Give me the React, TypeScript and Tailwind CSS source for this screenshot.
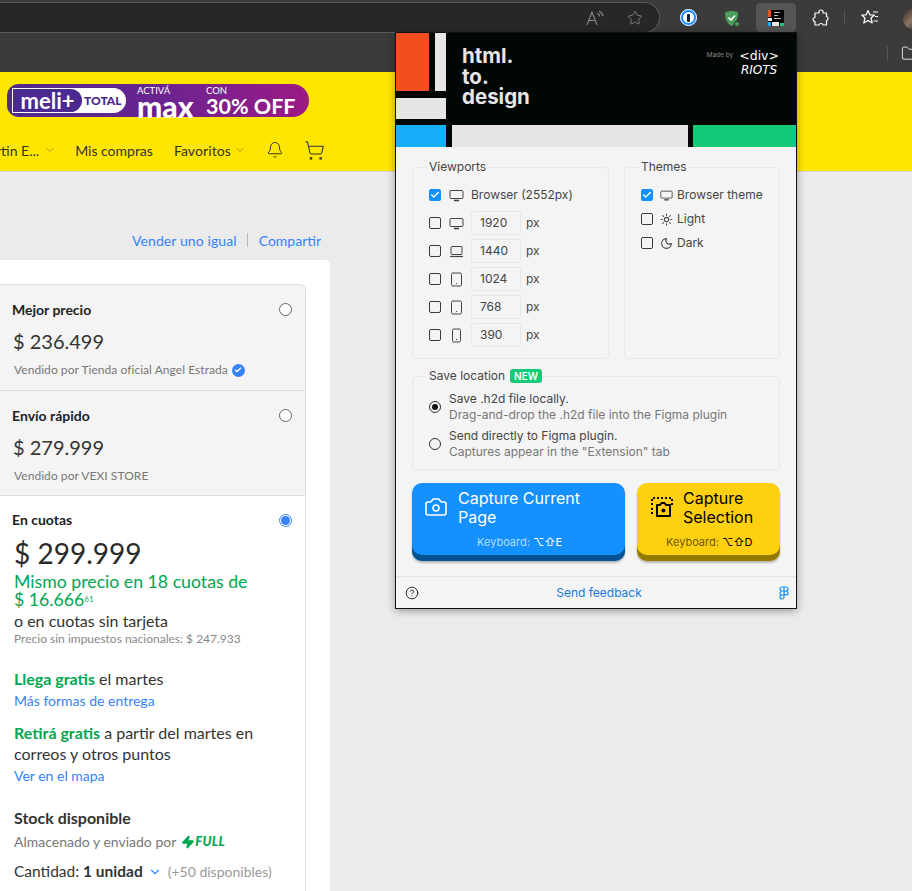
import { Star, Bell, ShoppingCart, ChevronDown, Camera, Sun, Moon, Check, CircleHelp, Folder, Zap } from "lucide-react";

const sans = "font-['Lato','Open_Sans',sans-serif]";

function Checkbox({ on }: { on?: boolean }) {
  return on ? (
    <span className="flex h-3 w-3 shrink-0 items-center justify-center rounded-[2px] bg-[#1490ff]">
      <Check className="h-2.5 w-2.5 text-white" strokeWidth={3.5} />
    </span>
  ) : (
    <span className="h-3 w-3 shrink-0 rounded-[2px] border border-[#3a3a3a]" />
  );
}

function MonitorIcon({ className }: { className: string }) {
  return (
    <svg viewBox="0 0 15 15" className={className} fill="none" stroke="currentColor">
      <rect x="1" y="2.5" width="13" height="8" rx="1" />
      <path d="M5 12.5h5" strokeWidth="1.6" />
    </svg>
  );
}

function LaptopIcon({ className }: { className: string }) {
  return (
    <svg viewBox="0 0 15 15" className={className} fill="none" stroke="currentColor">
      <rect x="2" y="2.5" width="11" height="8" rx="1" />
      <path d="M1 12.5h13" strokeWidth="1.2" />
    </svg>
  );
}

function TabletIcon({ className }: { className: string }) {
  return (
    <svg viewBox="0 0 15 15" className={className} fill="none" stroke="currentColor">
      <rect x="2.5" y="1" width="10" height="13" rx="1.5" />
      <path d="M7 11.5h1" strokeWidth="1.2" />
    </svg>
  );
}

function PhoneIcon({ className }: { className: string }) {
  return (
    <svg viewBox="0 0 15 15" className={className} fill="none" stroke="currentColor">
      <rect x="3.5" y="1" width="8" height="13" rx="1.5" />
      <path d="M7 11.5h1" strokeWidth="1.2" />
    </svg>
  );
}

const viewports = [
  { size: "1920", Icon: MonitorIcon },
  { size: "1440", Icon: LaptopIcon },
  { size: "1024", Icon: TabletIcon },
  { size: "768", Icon: TabletIcon },
  { size: "390", Icon: PhoneIcon },
];

function PriceOption({ title, price, seller, badge, short }: { title: string; price: string; seller: string; badge?: boolean; short?: boolean }) {
  return (
    <div className={`relative border-b border-[#dedede] pl-3 pt-[16px] ${short ? "h-[105px]" : "h-[106px]"}`}>
      <div className="text-[14px] font-bold leading-[18px] text-[#222]">{title}</div>
      <div className="ml-[1px] mt-[9px] text-[20px] leading-[26px] text-[#333]">{price}</div>
      <div className="ml-[2px] mt-[8px] flex items-center gap-1 text-[12px] leading-4 tracking-[0.05px] text-[#777]">
        {seller}
        {badge && (
          <span className="flex h-[13px] w-[13px] items-center justify-center rounded-full bg-[#3483fa]">
            <Check className="h-2 w-2 text-white" strokeWidth={4} />
          </span>
        )}
      </div>
      <span className="absolute right-[13px] top-[18px] h-[13px] w-[13px] rounded-full border border-[#666] bg-white" />
    </div>
  );
}

function Page() {
  return (
    <div className={`flex min-h-0 flex-1 flex-col ${sans}`}>
      <div className="h-[100px] shrink-0 border-b border-[#d8d8d8] bg-[#ffe600]">
        <div className="ml-[7px] mt-[12px] flex h-[33px] w-[302px] items-center rounded-l-[12px] rounded-r-[17px] bg-[linear-gradient(90deg,#4f2a8e,#6a2490_50%,#9c1a86)] text-white">
          <div className="ml-[5px] flex h-[25px] w-[114px] items-center rounded-r-full rounded-l-[10px] border border-white bg-white">
            <span className="flex h-[23px] w-[69px] items-center justify-center rounded-full rounded-l-[9px] bg-[#4a2a90] text-[22px] font-bold leading-none">meli+</span>
            <span className="ml-[2px] text-[12px] font-black leading-none text-[#4a2a90]">TOTAL</span>
          </div>
          <div className="ml-[11px] flex w-[69px] flex-col leading-none">
            <span className="text-[9.5px] leading-[10px]">ACTIVÁ</span>
            <span className="text-[30px] font-black leading-[20px]">max</span>
          </div>
          <div className="flex flex-col leading-none">
            <span className="text-[9.5px] leading-[10px]">CON</span>
            <span className="whitespace-nowrap text-[21.5px] font-bold leading-[20px]">30% OFF</span>
          </div>
        </div>
        <div className="mt-[21px] flex h-[24px] items-center text-[14px] text-[#333]">
          <span className="-ml-[4px] whitespace-nowrap">rtin E...</span>
          <ChevronDown className="ml-[5px] h-3 w-3 text-[#a89a20]" />
          <span className="ml-[19px]">Mis compras</span>
          <span className="ml-[21px] tracking-[0.1px]">Favoritos</span>
          <ChevronDown className="ml-[3px] h-3 w-3 text-[#a89a20]" />
          <Bell className="ml-[20px] h-[18px] w-[18px] text-[#333]" strokeWidth={1.3} />
          <ShoppingCart className="ml-[20px] h-[21px] w-[21px] text-[#333]" strokeWidth={1.2} />
        </div>
      </div>
      <div className="flex-1 bg-[#ebebeb]">
        <div className="ml-[132px] mt-[60px] flex h-4 items-center text-[14px] text-[#3483fa]">
          <span className="tracking-[0.1px]">Vender uno igual</span>
          <span className="ml-[10px] mr-[11px] h-[14px] w-px bg-[#bbb]" />
          <span>Compartir</span>
        </div>
        <div className="mt-[12px] h-[700px] w-[330px] rounded-r-[5px] bg-white pr-[24px] pt-[24px]">
          <div className="rounded-tr-[6px] border-r border-t border-[#dedede] bg-[#f4f4f4]">
            <PriceOption title="Mejor precio" price="$ 236.499" seller="Vendido por Tienda oficial Angel Estrada" badge />
            <PriceOption title="Envío rápido" price="$ 279.999" seller="Vendido por VEXI STORE" short />
          </div>
          <div className="relative h-[400px] border-r border-[#dedede] pl-[14px] pt-[15px] text-[#333]">
            <div className="-ml-[2px] text-[14px] font-bold leading-[18px] text-[#222]">En cuotas</div>
            <span className="absolute right-[13px] top-[18px] flex h-[13px] w-[13px] items-center justify-center rounded-full border border-[#3483fa] bg-white">
              <span className="h-[9px] w-[9px] rounded-full bg-[#3483fa]" />
            </span>
            <div className="mt-[8px] text-[28px] leading-[32px] text-[#2a2a2a]">$ 299.999</div>
            <div className="mt-[4px] whitespace-nowrap text-[17.7px] leading-[18px] text-[#00a650]">
              Mismo precio en 18 cuotas de
              <br />
              $ 16.666<sup className="text-[8px]">61</sup>
            </div>
            <div className="mt-[2px] text-[16px] leading-5">o en cuotas sin tarjeta</div>
            <div className="text-[12px] leading-[16px] text-[#888]">Precio sin impuestos nacionales: $ 247.933</div>
            <div className="mt-[21px] text-[16px] leading-[21px]"><b className="text-[#00a650]">Llega gratis</b> el martes</div>
            <div className="mt-[1px] text-[14px] leading-[21px] text-[#3483fa]">Más formas de entrega</div>
            <div className="mt-[11px] text-[16px] leading-[21px]"><b className="text-[#00a650]">Retirá gratis</b> a partir del martes en<br />correos y otros puntos</div>
            <div className="mt-[1px] text-[14px] leading-[21px] text-[#3483fa]">Ver en el mapa</div>
            <div className="mt-[21px] text-[16px] font-bold leading-[21px]">Stock disponible</div>
            <div className="mt-[3px] flex items-center text-[14px] leading-[21px] text-[#777]">
              Almacenado y enviado por
              <Zap className="ml-[5px] h-[14px] w-[14px] fill-[#00a650] text-[#00a650]" />
              <span className="text-[13px] font-black italic tracking-wide text-[#00a650]">FULL</span>
            </div>
            <div className="mt-[9px] flex items-center text-[15.5px] leading-[21px]">
              Cantidad:<b className="ml-1">1 unidad</b>
              <ChevronDown className="ml-[5px] h-[14px] w-[14px] text-[#3483fa]" />
              <span className="ml-[6px] text-[14px] text-[#999]">(+50 disponibles)</span>
            </div>
          </div>
        </div>
      </div>
    </div>
  );
}

function Popup() {
  return (
    <div className="absolute left-[395px] top-[32px] w-[402px] border border-[#111] bg-[#f4f4f4] font-['Inter',sans-serif] shadow-[0_2px_8px_rgba(0,0,0,0.35)]">
      {/* mondrian header */}
      <div className="relative h-[114px] bg-[#010705]">
        <div className="absolute left-0 top-0 h-[58px] w-[33px] bg-[#f34e1f]" />
        <div className="absolute left-[39px] top-0 h-[58px] w-[11px] bg-[#e6e6e6]" />
        <div className="absolute left-0 top-[65px] h-[21px] w-[50px] bg-[#e6e6e6]" />
        <div className="absolute bottom-0 left-0 h-[22px] w-[50px] bg-[#19aefb]" />
        <div className="absolute bottom-0 left-[56px] h-[22px] w-[236px] bg-[#e6e6e6]" />
        <div className="absolute bottom-0 right-0 h-[22px] w-[103px] bg-[#12ca78]" />
        <div className="absolute left-[66px] top-[13px] text-[20.5px] font-bold leading-[20.5px] text-[#e6e6e6]">html.<br />to.<br />design</div>
        <div className="absolute right-[17px] top-[15px] flex gap-[6px] text-white">
          <span className="mt-[3px] text-[6.5px] leading-[8px] text-[#888]">Made by</span>
          <div className="flex flex-col items-center font-['DejaVu_Sans',sans-serif] leading-none">
            <span className="text-[12.5px] leading-[15px]">&lt;div&gt;</span>
            <span className="text-[12px] italic leading-[15px]">RIOTS</span>
          </div>
        </div>
      </div>
      <div className="px-4 pt-[12px] text-[12px] leading-4 text-[#444]">
        <div className="flex justify-between">
          <fieldset className="h-[200px] w-[197px] rounded-[4px] border border-[#e8e8e8] px-4 pt-[10px]">
            <legend className="-ml-[1px] px-[1px] text-[12px]">Viewports</legend>
            <div className="mb-[6px] flex h-5 items-center">
              <Checkbox on />
              <MonitorIcon className="ml-[8px] h-[15px] w-[15px]" />
              <span className="ml-[7px] whitespace-nowrap">Browser (2552px)</span>
            </div>
            {viewports.map(({ size, Icon }) => (
              <div key={size} className="mt-[4px] flex h-6 items-center">
                <Checkbox />
                <Icon className="ml-[8px] h-[15px] w-[15px]" />
                <span className="ml-[7px] flex h-6 w-[50px] items-center rounded-[2px] border border-[#e8e8e8] pl-2">{size}</span>
                <span className="ml-[5px]">px</span>
              </div>
            ))}
          </fieldset>
          <fieldset className="h-[200px] w-[156px] rounded-[4px] border border-[#e8e8e8] px-4 pt-[10px]">
            <legend className="-ml-[1px] px-[1px] text-[12px]">Themes</legend>
            {[
              { label: "Browser theme", Icon: MonitorIcon, on: true },
              { label: "Light", Icon: Sun, on: false },
              { label: "Dark", Icon: Moon, on: false },
            ].map(({ label, Icon, on }) => (
              <div key={label} className="mb-[4px] flex h-5 items-center">
                <Checkbox on={on} />
                <Icon className="ml-[7px] h-[13px] w-[13px]" />
                <span className="ml-[4px] whitespace-nowrap">{label}</span>
              </div>
            ))}
          </fieldset>
        </div>
        <fieldset className="mt-[9px] h-[102px] rounded-[4px] border border-[#e8e8e8] px-4 pt-[7px]">
          <legend className="-ml-[1px] flex items-center gap-[5px] px-[1px]">
            Save location
            <span className="rounded-[3px] bg-[#12ca78] px-[4px] text-[10px] font-semibold leading-[14px] text-white">NEW</span>
          </legend>
          <div className="flex items-center">
            <span className="flex h-3 w-3 shrink-0 items-center justify-center rounded-full border border-[#333]">
              <span className="h-[6px] w-[6px] rounded-full bg-[#111]" />
            </span>
            <div className="ml-2">
              <div>Save .h2d file locally.</div>
              <div className="text-[#777]">Drag-and-drop the .h2d file into the Figma plugin</div>
            </div>
          </div>
          <div className="mt-[5px] flex items-center">
            <span className="h-3 w-3 shrink-0 rounded-full border border-[#333]" />
            <div className="ml-2">
              <div>Send directly to Figma plugin.</div>
              <div className="text-[#777]">Captures appear in the "Extension" tab</div>
            </div>
          </div>
        </fieldset>
        <div className="mt-[13px] flex justify-between">
          <div className="h-[78px] w-[213px] rounded-[10px] bg-[#1490ff] pt-[6px] text-white shadow-[inset_0_-6px_0_#04528f,0_2px_2px_rgba(0,0,0,0.25)]">
            <div className="flex pl-3">
              <Camera className="mt-[6px] h-6 w-6 shrink-0" strokeWidth={1.6} />
              <div className="ml-[10px] text-[16px] leading-[19px]">Capture Current<br />Page</div>
            </div>
            <div className="mt-[7px] pl-[65px] text-[11px] leading-4 text-[#b5dcff]">Keyboard: <span className="text-white">⌥⇧E</span></div>
          </div>
          <div className="h-[78px] w-[143px] rounded-[10px] bg-[#ffd00f] pt-[6px] text-black shadow-[inset_0_-6px_0_#967a00,0_2px_2px_rgba(0,0,0,0.25)]">
            <div className="flex pl-[14px]">
              <svg viewBox="0 0 22 22" className="mt-[7px] h-[22px] w-[22px] shrink-0" fill="none" stroke="currentColor">
                <path d="M1 9V2h20v7" strokeWidth="2" strokeDasharray="2 2" />
                <path d="M1 12v8" strokeWidth="2" strokeDasharray="2 2" />
                <path d="M6 9h3l1.5-2h3L15 9h4v11H6z" strokeWidth="2" strokeLinejoin="round" />
                <circle cx="12.5" cy="14.5" r="2" fill="currentColor" stroke="none" />
              </svg>
              <div className="ml-[10px] text-[16px] leading-[19px]">Capture<br />Selection</div>
            </div>
            <div className="mt-[7px] pl-[29px] text-[11px] leading-4 text-[#6b5800]">Keyboard: <span className="text-black">⌥⇧D</span></div>
          </div>
        </div>
      </div>
      <div className="mt-[15px] flex h-[32px] items-center justify-between border-t border-[#e4e4e4] pl-[9px] pr-[7px]">
        <CircleHelp className="h-[14px] w-[14px] text-[#222]" strokeWidth={1.6} />
        <span className="text-[12px] text-[#1a78e0]">Send feedback</span>
        <svg viewBox="0 0 10 14" className="h-[14px] w-[10px] text-[#1490ff]" fill="none" stroke="currentColor" strokeWidth="1.2">
          <path d="M5 1H3a2 2 0 0 0 0 4h2zM5 1h2a2 2 0 0 1 0 4H5zM5 5H3a2 2 0 0 0 0 4h2zM5 9H3a2 2 0 1 0 2 2zM7 5a2 2 0 1 1 0 4 2 2 0 0 1 0-4z" />
        </svg>
      </div>
    </div>
  );
}

export default function App() {
  return (
    <div className="relative flex h-[891px] w-[912px] flex-col overflow-hidden bg-[#ebebeb]">
      {/* browser toolbar */}
      <div className="relative h-[33px] shrink-0 bg-[#3b3b3b]">
        <div className="absolute left-0 top-[2px] flex h-[31px] w-[660px] items-center justify-end rounded-r-[16px] border border-l-0 border-[#5a5a5a] bg-[#272727] pr-[16px]">
          <svg viewBox="0 0 18 16" className="mr-[23px] h-4 w-[18px] text-[#888]" fill="none" stroke="currentColor" strokeWidth="1.1">
            <path d="M1 15 6 2l5 13M3 10.5h6M11 3c1.5.7 2.5 2 3 3.5M13 1c2 1 3.5 3 4 5" />
          </svg>
          <Star className="h-4 w-4 text-[#888]" strokeWidth={1.3} />
        </div>
        {/* 1password */}
        <span className="absolute left-[680px] top-[9px] flex h-[17px] w-[17px] items-center justify-center rounded-full border-[3px] border-[#1a8cff] bg-white outline outline-1 -outline-offset-1 outline-white">
          <span className="h-2 w-[3px] rounded-[1px] bg-[#123]" />
        </span>
        {/* adguard */}
        <svg viewBox="0 0 16 17" className="absolute left-[724px] top-[10px] h-[17px] w-4">
          <path d="M1 2.500C3 1.500 5.500 1 7.500 1s4.500.5 6.500 1.500C14 9 12 13.500 7.500 16 3 13.500 1 9 1 2.500z" fill="#4c9e5c" />
          <path d="M4.500 7.500 7 10l4-4.500" fill="none" stroke="#fff" strokeWidth="1.600" />
          <circle cx="13" cy="14" r="3" fill="#3b3b3b" />
          <circle cx="13" cy="14" r="2" fill="#4c9e5c" />
        </svg>
        {/* html.to.design extension */}
        <span className="absolute left-[756px] top-[3px] h-[29px] w-[40px] rounded-[4px] bg-[#555]">
          <span className="absolute left-[12px] top-[7px] h-[16px] w-[16px] bg-black" />
          <span className="absolute left-[12px] top-[7px] h-[7px] w-[3px] bg-[#f34e1f]" />
          <span className="absolute left-[12px] top-[15px] h-[3px] w-[4px] bg-[#e6e6e6]" />
          <span className="absolute left-[18px] top-[9px] h-[1px] w-[6px] bg-[#bbb]" />
          <span className="absolute left-[18px] top-[12px] h-[1px] w-[4px] bg-[#bbb]" />
          <span className="absolute left-[18px] top-[15px] h-[1px] w-[7px] bg-[#bbb]" />
          <span className="absolute left-[12px] top-[19px] h-[4px] w-[3px] bg-[#19aefb]" />
          <span className="absolute left-[16px] top-[19px] h-[4px] w-[7px] bg-[#e6e6e6]" />
          <span className="absolute left-[24px] top-[20px] h-[3px] w-[4px] bg-[#12ca78]" />
        </span>
        {/* extensions */}
        <svg viewBox="0 0 18 18" className="absolute left-[812px] top-[9px] h-[18px] w-[18px] text-white" fill="none" stroke="currentColor" strokeWidth="1.200" strokeLinejoin="round">
          <path d="M7 2.500c0-2 4-2 4 0V4h3.500v3.500c2 0 2 4 0 4V16H11c0-2-4-2-4 0H3v-3.500c-2.500 0-2.500-4 0-4V4h4z" />
        </svg>
        <span className="absolute left-[844px] top-[10px] h-[15px] w-px bg-[#555]" />
        {/* favorites */}
        <svg viewBox="0 0 18 17" className="absolute left-[861px] top-[9px] h-[17px] w-[18px] text-white" fill="none" stroke="currentColor" strokeWidth="1.200" strokeLinejoin="round">
          <path d="M7 1.500 9 6h4.500L10 9l1.200 5L7 11.500 2.800 14 4 9 .8 6H5z" />
          <path d="M12 3h5M14 7.500h3M12.500 12H17" />
        </svg>
        <span className="absolute left-[903px] top-[9px] h-[20px] w-[20px] rounded-full bg-[linear-gradient(135deg,#3a2c30,#8a7460,#1f2a40)]" />
      </div>
      {/* bookmarks bar */}
      <div className="relative h-[39px] shrink-0 bg-[#3b3b3b]">
        <span className="absolute left-[887px] top-[13px] h-[15px] w-px bg-[#555]" />
        <Folder className="absolute left-[901px] top-[12px] h-[17px] w-[17px] text-white" strokeWidth={1.2} />
      </div>
      <Page />
      <Popup />
    </div>
  );
}
